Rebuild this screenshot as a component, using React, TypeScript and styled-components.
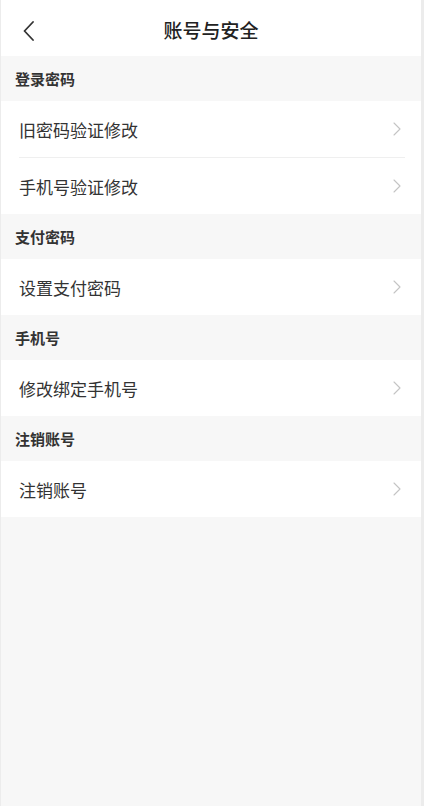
import React from 'react'
import styled, {createGlobalStyle} from 'styled-components'

const GlobalStyle = createGlobalStyle`
  html, body {
    margin: 0;
    padding: 0;
    background: #ececec;
  }
  body {
    font-family: "Noto Sans CJK SC", "Noto Sans", sans-serif;
  }
`

const Page = styled.div`
  width: 420px;
  min-height: 806px;
  margin-left: 1px;
  background: #f7f7f7;
  display: flex;
  flex-direction: column;
`

const Header = styled.div`
  height: 56px;
  background: #fff;
  display: grid;
  grid-template-columns: 56px 1fr 56px;
  align-items: center;
`

const BackButton = styled.button`
  border: none;
  background: none;
  padding: 5px 0 0 21px;
  height: 56px;
  display: flex;
  align-items: center;
  cursor: pointer;
`

const Title = styled.div`
  text-align: center;
  font-size: 19px;
  font-weight: 500;
  color: #222;
  padding-top: 3px;
`

const SectionTitle = styled.div`
  height: 45px;
  padding-left: 14px;
  display: flex;
  align-items: center;
  font-size: 15px;
  font-weight: 700;
  color: #333;
`

const Group = styled.div`
  background: #fff;
  padding: 0 16px 0 18px;
`

const Row = styled.div<{divider?: boolean}>`
  height: 56px;
  display: flex;
  align-items: center;
  justify-content: space-between;
  border-top: ${p => (p.divider ? '1px solid #efefef' : 'none')};
  cursor: pointer;
`

const Label = styled.span`
  font-size: 17px;
  color: #333;
`

const ChevronIcon = styled.svg`
  margin-right: 4px;
`

const Chevron = () =>
  <ChevronIcon width="8" height="14" viewBox="0 0 8 14" fill="none">
    <path d="M1 1l6 6-6 6" stroke="#c4c4c4" strokeWidth="1.1" strokeLinecap="round" strokeLinejoin="round" />
  </ChevronIcon>

const sections = [
  {title: '登录密码', items: ['旧密码验证修改', '手机号验证修改']},
  {title: '支付密码', items: ['设置支付密码']},
  {title: '手机号', items: ['修改绑定手机号']},
  {title: '注销账号', items: ['注销账号']},
]

export default function App() {
  return <>
    <GlobalStyle />
    <Page>
      <Header>
        <BackButton aria-label="back">
          <svg width="14" height="20" viewBox="0 0 14 20" fill="none">
            <path d="M11 1L2.5 10L11 19" stroke="#333" strokeWidth="1.8" strokeLinecap="round" strokeLinejoin="round" />
          </svg>
        </BackButton>
        <Title>账号与安全</Title>
        <div />
      </Header>
      {sections.map(section =>
        <React.Fragment key={section.title}>
          <SectionTitle>{section.title}</SectionTitle>
          <Group>
            {section.items.map((item, i) =>
              <Row key={item} divider={i > 0}>
                <Label>{item}</Label>
                <Chevron />
              </Row>
            )}
          </Group>
        </React.Fragment>
      )}
    </Page>
  </>
}
